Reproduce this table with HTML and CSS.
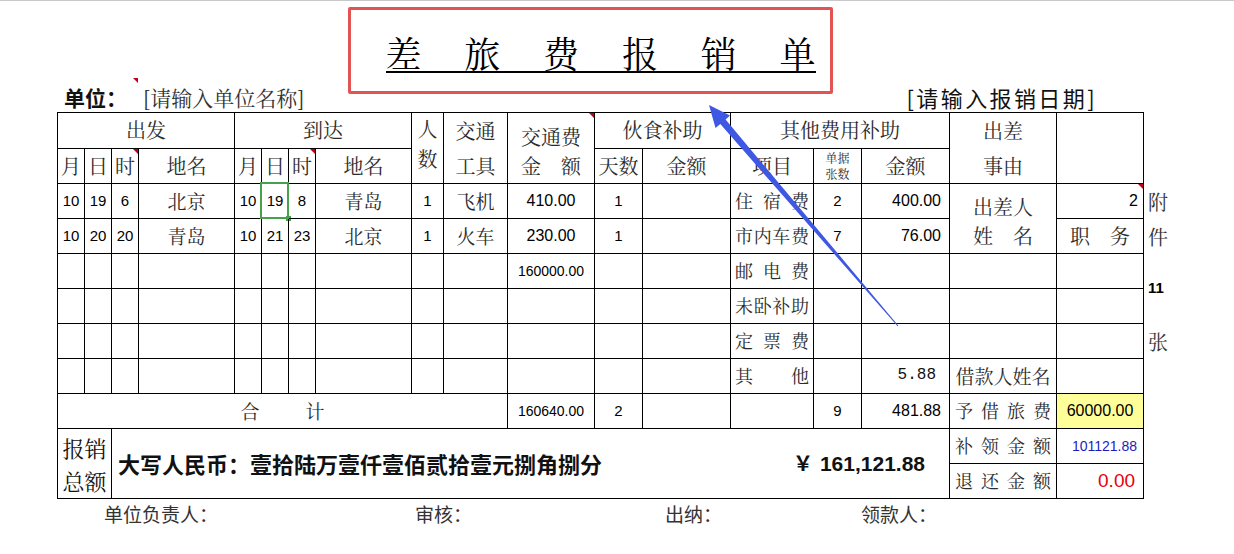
FILE: index.html
```html
<!DOCTYPE html>
<html lang="zh-CN">
<head>
<meta charset="utf-8">
<title>差旅费报销单</title>
<link rel="stylesheet" href="styles.css">
</head>
<body>
<div class="page">
  <div class="title">
    <h1 class="title-text"><span>差</span><span>旅</span><span>费</span><span>报</span><span>销</span><span>单</span></h1>
  </div>
  <div class="meta">
    <div class="unit">
      <span class="unit-label">单位：<i class="tri mark"></i></span>
      <span class="unit-name">[请输入单位名称]</span>
    </div>
    <div class="date">[请输入报销日期]</div>
  </div>
  <table class="sheet">
    <colgroup>
      <col style="width:28px"><col style="width:27px"><col style="width:27px"><col style="width:96px">
      <col style="width:27px"><col style="width:27px"><col style="width:27px"><col style="width:96px">
      <col style="width:32px"><col style="width:64px"><col style="width:87px"><col style="width:48px">
      <col style="width:88px"><col style="width:83px"><col style="width:48px"><col style="width:88px">
      <col style="width:107px"><col style="width:87px"><col style="width:40px">
    </colgroup>
    <tbody>
      <tr class="h1">
        <td colspan="4">出发</td>
        <td colspan="4">到达</td>
        <td rowspan="2" class="stack30">人<br>数</td>
        <td rowspan="2" class="stack35">交通<br>工具</td>
        <td rowspan="2"><div class="pair"><span>交通费</span><span class="just"><span>金</span><span>额</span></span></div><i class="tri"></i></td>
        <td colspan="2">伙食补助</td>
        <td colspan="3">其他费用补助</td>
        <td rowspan="2" class="stack35">出差<br>事由</td>
        <td rowspan="2"></td>
      </tr>
      <tr class="h2">
        <td>月</td><td>日</td><td>时<i class="tri"></i></td><td>地名</td>
        <td>月</td><td>日</td><td>时<i class="tri"></i></td><td>地名</td>
        <td>天数</td><td>金额</td><td>项目</td><td class="tiny">单据<br>张数</td><td>金额</td>
      </tr>
      <tr>
        <td class="n">10</td><td class="n">19</td><td class="n">6</td><td class="place">北京</td>
        <td class="n">10</td><td class="n">19<i class="selbox"></i><i class="handle"></i></td><td class="n">8</td><td class="place">青岛</td>
        <td class="n">1</td><td class="place">飞机</td><td class="n n16">410.00</td><td class="n">1</td><td></td>
        <td><div class="dist item"><span>住</span><span>宿</span><span>费</span></div></td>
        <td class="n">2</td><td class="n n16 r">400.00</td>
        <td rowspan="2"><div class="pair p2"><span>出差人</span><span class="just"><span>姓</span><span>名</span></span></div></td>
        <td class="n n16 r r5">2<i class="tri"></i></td>
        <td class="ext">附</td>
      </tr>
      <tr>
        <td class="n">10</td><td class="n">20</td><td class="n">20</td><td class="place">青岛</td>
        <td class="n">10</td><td class="n">21</td><td class="n">23</td><td class="place">北京</td>
        <td class="n">1</td><td class="place">火车</td><td class="n n16">230.00</td><td class="n">1</td><td></td>
        <td><div class="dist item"><span>市</span><span>内</span><span>车</span><span>费</span></div></td>
        <td class="n">7</td><td class="n n16 r">76.00</td>
        <td><div class="dist duty"><span>职</span><span>务</span></div></td>
        <td class="ext">件</td>
      </tr>
      <tr>
        <td></td><td></td><td></td><td></td><td></td><td></td><td></td><td></td><td></td><td></td>
        <td class="n n14">160000.00</td><td></td><td></td>
        <td><div class="dist item"><span>邮</span><span>电</span><span>费</span></div></td>
        <td></td><td></td><td></td><td></td>
        <td class="ext ext-num" rowspan="2"><b class="att">11</b></td>
      </tr>
      <tr>
        <td></td><td></td><td></td><td></td><td></td><td></td><td></td><td></td><td></td><td></td>
        <td></td><td></td><td></td>
        <td><div class="dist item"><span>未</span><span>卧</span><span>补</span><span>助</span></div></td>
        <td></td><td></td><td></td><td></td>
      </tr>
      <tr>
        <td></td><td></td><td></td><td></td><td></td><td></td><td></td><td></td><td></td><td></td>
        <td></td><td></td><td></td>
        <td><div class="dist item"><span>定</span><span>票</span><span>费</span></div></td>
        <td></td><td></td><td></td><td></td>
        <td class="ext">张</td>
      </tr>
      <tr>
        <td></td><td></td><td></td><td></td><td></td><td></td><td></td><td></td><td></td><td></td>
        <td></td><td></td><td></td>
        <td><div class="dist item"><span>其</span><span>他</span></div></td>
        <td></td><td class="mono r r13">5.88</td>
        <td class="borrow">借款人姓名</td><td></td>
      </tr>
      <tr>
        <td colspan="10" class="sum"><span>合</span><span class="gap"></span><span>计</span></td>
        <td class="n n14">160640.00</td><td class="n">2</td><td></td><td></td>
        <td class="n">9</td><td class="n n16 r">481.88</td>
        <td><div class="dist label"><span>予</span><span>借</span><span>旅</span><span>费</span></div></td>
        <td class="n n16 yellow">60000.00</td>
      </tr>
      <tr>
        <td colspan="2" rowspan="2" class="bx">报销<br>总额</td>
        <td colspan="14" rowspan="2" class="total">
          <div class="total-row">
            <span class="amount-cn">大写人民币：壹拾陆万壹仟壹佰贰拾壹元捌角捌分</span>
            <span class="amount-num"><span class="yen">￥</span>161,121.88</span>
          </div>
        </td>
        <td><div class="dist label"><span>补</span><span>领</span><span>金</span><span>额</span></div></td>
        <td class="n blue r">101121.88</td>
      </tr>
      <tr>
        <td class="nl"><div class="dist label"><span>退</span><span>还</span><span>金</span><span>额</span></div></td>
        <td class="n red r">0.00</td>
      </tr>
    </tbody>
  </table>
  <div class="sign">
    <span class="s1">单位负责人：</span>
    <span class="s2">审核：</span>
    <span class="s3">出纳：</span>
    <span>领款人：</span>
  </div>
</div>
<div class="frame"></div>
<svg class="arrow" width="1234" height="554" viewBox="0 0 1234 554">
  <polygon points="709,105 730,115.5 725.6,119.6 898.4,325.7 897.6,326.3 720.3,124.1 715.5,128" fill="#3f58e3"/>
</svg>
</body>
</html>
```

FILE: styles.css
```css
* { box-sizing: border-box; }

body {
  margin: 0;
  border-top: 1px solid #c8c8c8;
  background: #fff;
  font-family: "Noto Sans CJK SC", sans-serif;
  color: #222;
}

.page {
  padding-left: 57px;
}

.title {
  width: 1087px;
  height: 72px;
  padding-top: 34px;
  display: flex;
  justify-content: center;
  align-items: flex-start;
}

.title-text {
  display: flex;
  justify-content: space-between;
  width: 430px;
  margin: 0;
  font-family: "Noto Serif CJK SC", "Noto Sans CJK SC", serif;
  font-size: 36px;
  line-height: 36px;
  font-weight: normal;
  color: #000;
  border-bottom: 2px solid #000;
}

.meta {
  width: 1087px;
  height: 39px;
  padding-bottom: 2px;
  display: flex;
  justify-content: space-between;
  align-items: flex-end;
}

.unit {
  display: flex;
  align-items: baseline;
  padding-left: 7px;
  line-height: 26px;
}

.unit-label {
  position: relative;
  font-size: 21px;
  font-weight: bold;
  color: #111;
}

.unit-name {
  margin-left: 16px;
  font-size: 21px;
  color: #333;
  font-family: "Noto Serif CJK SC", "Noto Sans CJK SC", serif;
}

.date {
  padding-right: 47px;
  font-size: 22px;
  line-height: 26px;
  letter-spacing: 2.4px;
  color: #111;
}

/* table */
.sheet {
  border-collapse: separate;
  border-spacing: 0;
  table-layout: fixed;
  width: 1127px;
  font-family: "Noto Serif CJK SC", "Noto Sans CJK SC", serif;
  font-size: 20px;
  color: #2b2b2b;
}

.sheet tr { height: 35px; }
.sheet tr.h1 { height: 36px; }
.sheet tr.h1 td { border-top: 1px solid #000; }

.sheet td {
  position: relative;
  padding: 0;
  border-right: 1px solid #000;
  border-bottom: 1px solid #000;
  text-align: center;
  vertical-align: middle;
  line-height: 1.2;
  white-space: nowrap;
}

.sheet tr > td:first-child { border-left: 1px solid #000; }
.sheet tr > td.nl { border-left: 0; }

.sheet tr > td.ext {
  border: 0;
  text-align: left;
  padding-left: 4px;
  font-size: 20px;
  color: #333;
}
.sheet tr > td.ext-num { padding-bottom: 4px; }

.att {
  display: block;
  font-family: "Liberation Sans", Arial, sans-serif;
  font-size: 15px;
  line-height: 15px;
  color: #000;
}

.stack30 { line-height: 30px !important; padding-bottom: 8px !important; }
.stack35 { line-height: 35px !important; }

.pair {
  display: inline-flex;
  flex-direction: column;
  line-height: 29px;
  padding-top: 6px;
}
.pair.p2 { padding-top: 4px; }

.just {
  display: flex;
  justify-content: space-between;
}

.tiny {
  font-size: 12px;
  line-height: 16px !important;
}

.place { font-size: 19px; }

.n {
  font-family: "Liberation Sans", Arial, sans-serif;
  font-size: 15px;
  color: #000;
}
.n16 { font-size: 16px; }
.n14 { font-size: 14px; }

.sheet td.r { text-align: right; padding-right: 8px; }
.sheet td.r5 { padding-right: 5px; }
.sheet td.r13 { padding-right: 13px; }

.mono {
  font-family: "Liberation Mono", "Courier New", monospace;
  font-size: 16px;
  color: #111;
}

.dist {
  display: flex;
  justify-content: space-between;
}
.dist.item { font-size: 18px; padding: 0 4px; }
.dist.duty { font-size: 20px; padding: 0 13px; }
.dist.label { font-size: 18px; padding: 0 5px; }

.borrow { font-size: 19px; }

.sum { font-size: 19px; }
.gap { display: inline-block; width: 46px; }

.yellow { background: #ffff99; }

.bx {
  font-size: 22px;
  line-height: 33px !important;
  color: #111;
}

.total { padding: 0 24px 0 6px !important; }

.total-row {
  display: flex;
  justify-content: space-between;
  align-items: center;
}

.amount-cn {
  font-family: "Noto Sans CJK SC", sans-serif;
  font-size: 22px;
  font-weight: bold;
  color: #111;
}

.amount-num {
  font-family: "Liberation Sans", Arial, sans-serif;
  font-size: 21px;
  font-weight: bold;
  color: #111;
}

.yen {
  font-family: "Noto Sans CJK SC", sans-serif;
  font-size: 20px;
  margin-right: 7px;
}

.blue { color: #1c1cbf !important; font-size: 14px; }
.sheet td.blue { padding-right: 6px; }
.red { color: #e8000b !important; font-size: 19px; }

/* comment markers */
.tri {
  position: absolute;
  top: 0;
  right: 0;
  width: 0;
  height: 0;
  border-top: 5px solid #c0001a;
  border-left: 5px solid transparent;
}
.tri.mark { top: -6px; right: auto; left: 69px; }

/* selected cell */
.selbox {
  position: absolute;
  left: -2px;
  top: -2px;
  right: -1px;
  bottom: -1px;
  border: 2px solid #47a04b;
}
.handle {
  position: absolute;
  right: -3px;
  bottom: -3px;
  width: 5px;
  height: 5px;
  background: #47a04b;
}

/* signatures */
.sign {
  display: flex;
  padding: 0 0 0 47px;
  line-height: 30px;
  font-size: 19px;
  color: #333;
}
.s1 { width: 311px; }
.s2 { width: 250px; }
.s3 { width: 196px; }

/* annotations drawn over the sheet */
.frame {
  position: absolute;
  left: 348px;
  top: 7px;
  width: 485px;
  height: 87px;
  border: 3px solid #e25454;
  border-radius: 2px;
  pointer-events: none;
}

.arrow {
  position: absolute;
  left: 0;
  top: 0;
  pointer-events: none;
}
```
